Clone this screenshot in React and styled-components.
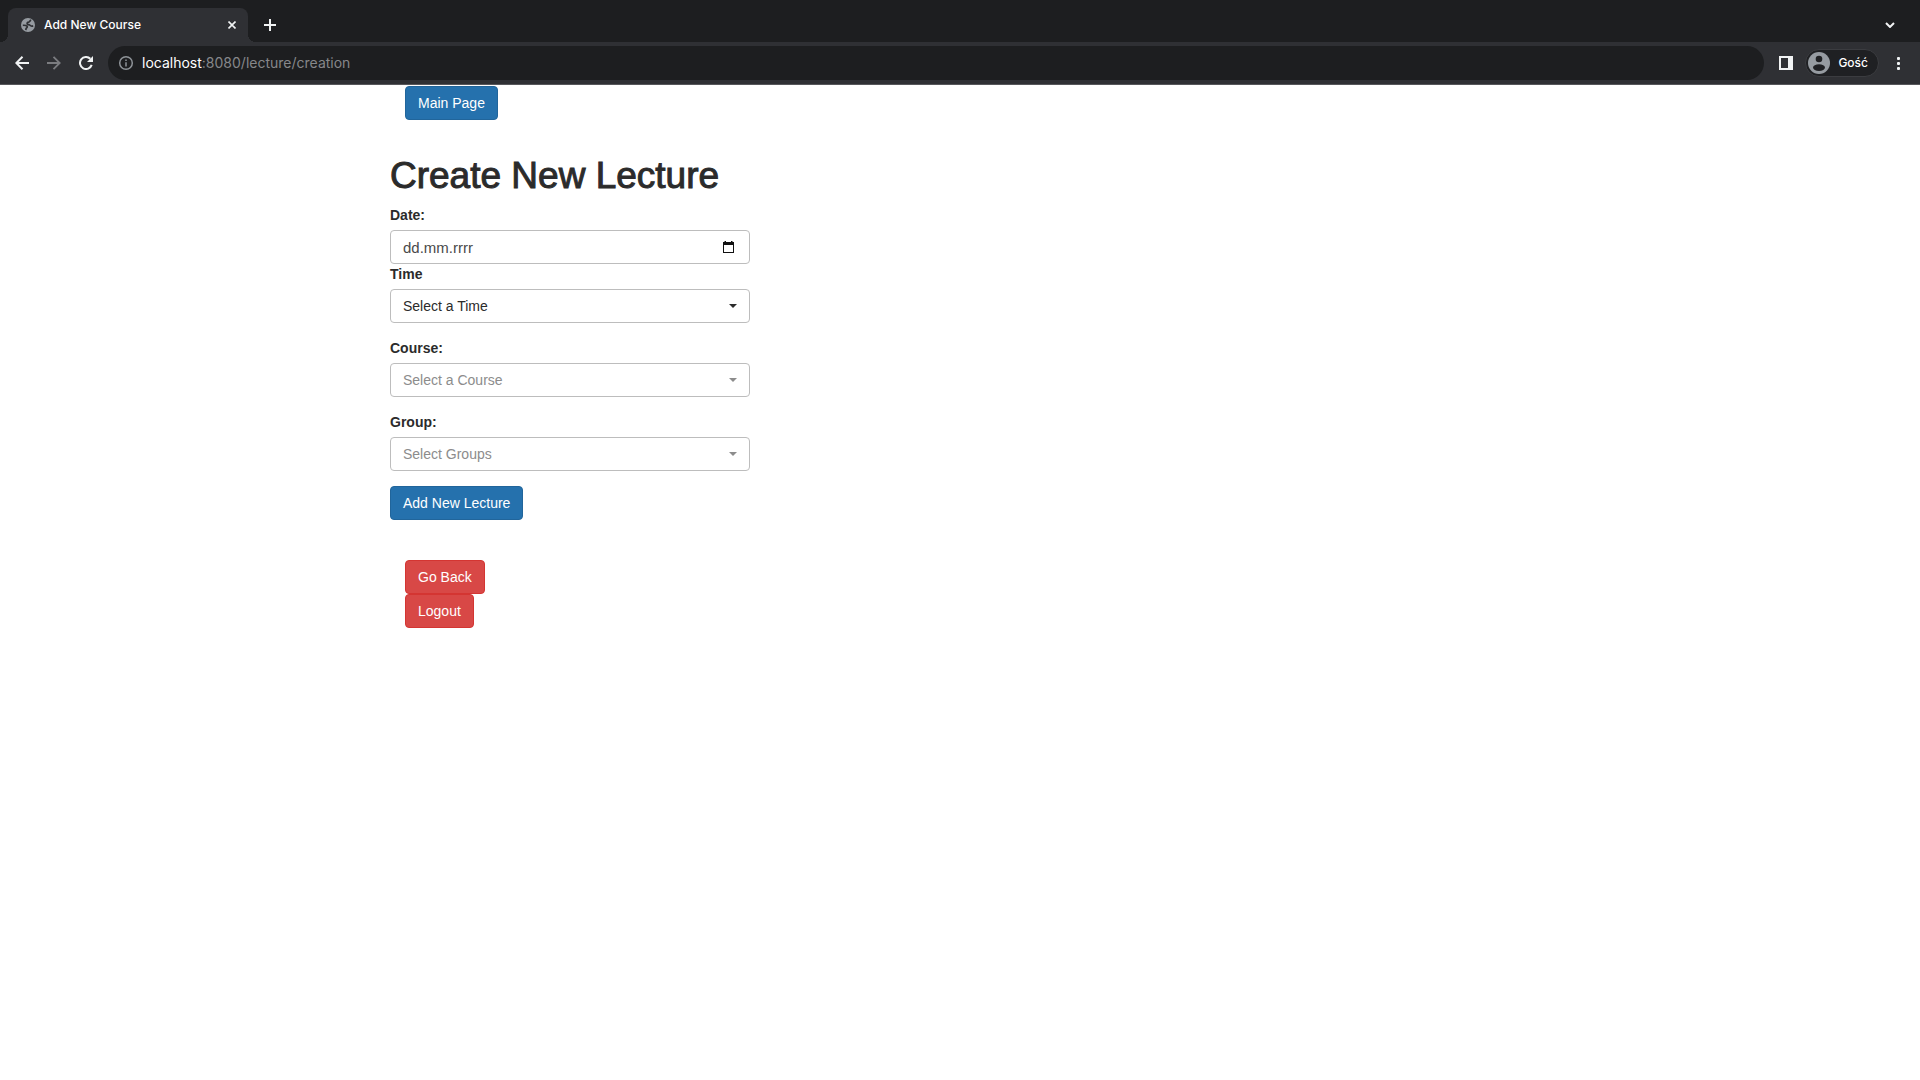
import React from "react";
import styled, { createGlobalStyle } from "styled-components";

const GlobalStyle = createGlobalStyle`
  *, *::before, *::after { box-sizing: border-box; }
  body {
    margin: 0;
    background: #fff;
    color: #2b2b2b;
    font-family: "Liberation Sans", Arial, Helvetica, sans-serif;
    font-size: 14px;
    line-height: 20px;
  }
  button, input, select { font: inherit; margin: 0; }
`;

const Chrome = styled.header`
  border-bottom: 1px solid #57575b;
  background: #1d1e20;
  color: #fff;
  font-family: Inter, Roboto, sans-serif;
`;

const TabStrip = styled.div`
  display: flex;
  align-items: center;
  justify-content: space-between;
  height: 42px;
  padding: 8px 18px 0 8px;
`;

const TabGroup = styled.div`
  display: flex;
  align-items: center;
  gap: 10px;
`;

const Tab = styled.div`
  position: relative;
  display: flex;
  align-items: center;
  gap: 8px;
  width: 240px;
  height: 34px;
  padding: 0 8px 0 12px;
  border-radius: 8px 8px 0 0;
  background: #2f3034;

  &::before,
  &::after {
    content: "";
    position: absolute;
    bottom: 0;
    width: 8px;
    height: 8px;
  }
  &::before {
    right: 100%;
    background: radial-gradient(circle at 0 0, transparent 8px, #2f3034 8px);
  }
  &::after {
    left: 100%;
    background: radial-gradient(circle at 100% 0, transparent 8px, #2f3034 8px);
  }
`;

const TabTitle = styled.span`
  flex: 1;
  font-size: 12px;
  line-height: 16px;
  font-weight: 500;
`;

const IconButton = styled.button`
  display: flex;
  align-items: center;
  justify-content: center;
  flex: none;
  width: ${(p) => p.$width || 24}px;
  height: 24px;
  padding: 0;
  border: 0;
  background: none;
  color: ${(p) => (p.disabled ? "#7b7c80" : "#f1f3f4")};
`;

const Toolbar = styled.div`
  display: flex;
  align-items: center;
  height: 42px;
  padding: 0 10px;
  background: #2f3034;
`;

const NavGroup = styled.nav`
  display: flex;
  gap: 8px;
  margin-right: 10px;
`;

const AddressBar = styled.div`
  display: flex;
  flex: 1;
  align-items: center;
  gap: 8px;
  height: 34px;
  padding: 0 10px;
  border-radius: 17px;
  background: #1d1e20;
  color: #8f9499;
`;

const Address = styled.div`
  flex: 1;
  color: #86878a;
  font-size: 14px;
  line-height: 20px;
  outline: none;
`;

const Host = styled.span`
  color: #fff;
`;

const Actions = styled.div`
  display: flex;
  align-items: center;
  gap: 7px;
  margin-left: 10px;
`;

const Profile = styled.button`
  display: flex;
  align-items: center;
  gap: 8px;
  height: 28px;
  padding: 0 10px 0 2px;
  border: 1px solid #3b3c40;
  border-radius: 14px;
  background: #1f2023;
  color: #fff;
  font-size: 12px;
  font-weight: 500;
`;

const Container = styled.main`
  width: 100%;
  max-width: 1170px;
  margin: 0 auto;
  padding: 1px 15px 32px;
`;

const ButtonStack = styled.div`
  display: flex;
  flex-direction: column;
  align-items: flex-start;
  padding-left: 15px;
`;

const tones = {
  primary: { fill: "#2571ad", edge: "#21659b" },
  danger: { fill: "#d84846", edge: "#d43532" },
};

const Button = styled.button`
  height: 34px;
  padding: 0 12px;
  border: 1px solid ${(p) => tones[p.$tone].edge};
  border-radius: 4px;
  background: ${(p) => tones[p.$tone].fill};
  color: #fff;
  white-space: nowrap;
  cursor: pointer;
`;

const Form = styled.form`
  margin: 35px 0 40px;
`;

const Title = styled.h1`
  margin: 0 0 8px;
  font-size: 37px;
  line-height: 42px;
  font-weight: 400;
  color: #2b2b2b;
  -webkit-text-stroke: 1px #2b2b2b;
`;

const Field = styled.div`
  max-width: 360px;
  margin-bottom: ${(p) => (p.$tight ? 0 : 15)}px;
`;

const Label = styled.label`
  display: block;
  margin-bottom: 5px;
  font-weight: 700;
`;

const Control = styled.div`
  position: relative;
  color: ${(p) => (p.$muted ? "#8c8c8c" : "#2b2b2b")};

  input, select {
    display: block;
    width: 100%;
    height: 34px;
    padding: 0 12px;
    border: 1px solid #bdbdbd;
    border-radius: 4px;
    background: #fff;
    color: inherit;
    opacity: 1;
    appearance: none;
  }
  input {
    font-size: 15px;
  }
  input::placeholder {
    color: #4a4a4a;
    opacity: 1;
  }
`;

const Adornment = styled.span`
  position: absolute;
  top: 0;
  bottom: 0;
  right: ${(p) => p.$right}px;
  display: flex;
  align-items: center;
  pointer-events: none;
`;

function SelectField({ id, label, option, muted }) {
  return (
    <Field>
      <Label htmlFor={id}>{label}</Label>
      <Control $muted={muted}>
        <select id={id} disabled={muted}>
          <option>{option}</option>
        </select>
        <Adornment $right={13}>
          <svg width="8" height="4" viewBox="0 0 8 4" fill="currentColor">
            <path d="M0 0h8L4 4z" />
          </svg>
        </Adornment>
      </Control>
    </Field>
  );
}

const stroke = { fill: "none", stroke: "currentColor", strokeWidth: 2 };

export default function App() {
  return (
    <>
      <GlobalStyle />
      <Chrome>
        <TabStrip>
          <TabGroup>
            <Tab>
              <svg width="16" height="16" viewBox="0 0 16 16">
                <circle cx="8" cy="8" r="7" fill="#969ba1" />
                <path
                  d="M11.200 3.200C9.600 3.400 9.900 4.900 8.700 5.100 7.300 5.300 6.800 6 7.300 7c.5.9 2.100.2 2.900 1.400.6.9 1.700.8 3 .5M2.800 8.300c1.800-.1 3.500 0 4.300 1 .6.8-.2 1.500-.8 1.900-.6.500-.3 1.300-.4 2"
                  fill="none"
                  stroke="#2f3034"
                  strokeWidth="1.700"
                />
              </svg>
              <TabTitle>Add New Course</TabTitle>
              <IconButton aria-label="Close tab" $width={16}>
                <svg width="8" height="8" viewBox="0 0 8 8">
                  <path d="M.5.5l7 7M7.500.5l-7 7" {...stroke} strokeWidth="1.600" />
                </svg>
              </IconButton>
            </Tab>
            <IconButton aria-label="New tab">
              <svg width="12" height="12" viewBox="0 0 12 12">
                <path d="M6 0v12M0 6h12" {...stroke} />
              </svg>
            </IconButton>
          </TabGroup>
          <IconButton aria-label="Search tabs">
            <svg width="10" height="6" viewBox="0 0 10 6">
              <path d="M1 1l4 4 4-4" {...stroke} />
            </svg>
          </IconButton>
        </TabStrip>
        <Toolbar>
          <NavGroup>
            <IconButton aria-label="Back">
              <svg width="14" height="14" viewBox="0 0 14 14">
                <path d="M14 7H1.500M7.500 .8L1.300 7l6.200 6.200" {...stroke} />
              </svg>
            </IconButton>
            <IconButton aria-label="Forward" disabled>
              <svg width="14" height="14" viewBox="0 0 14 14">
                <path d="M0 7h12.500M6.500 .8L12.700 7l-6.200 6.200" {...stroke} strokeWidth="1.800" />
              </svg>
            </IconButton>
            <IconButton aria-label="Reload">
              <svg width="14" height="14" viewBox="0 0 14 14">
                <path d="M12.700 8.900A6 6 0 1 1 11.300 2.800" {...stroke} />
                <path d="M14 0v6H8z" fill="currentColor" />
              </svg>
            </IconButton>
          </NavGroup>
          <AddressBar>
            <svg width="16" height="16" viewBox="0 0 16 16">
              <circle cx="8" cy="8" r="6.300" {...stroke} strokeWidth="1.500" />
              <path d="M8 7.200v4.200M8 4.400v1.600" {...stroke} strokeWidth="1.500" />
            </svg>
            <Address role="textbox" aria-label="Address" contentEditable suppressContentEditableWarning spellCheck={false}>
              <Host>localhost</Host>:8080/lecture/creation
            </Address>
          </AddressBar>
          <Actions>
            <IconButton aria-label="Side panel">
              <svg width="14" height="14" viewBox="0 0 14 14">
                <path d="M0 0h14v14H0zM2 2v10h7V2z" fill="currentColor" fillRule="evenodd" />
              </svg>
            </IconButton>
            <Profile>
              <svg width="22" height="22" viewBox="0 0 22 22">
                <circle cx="11" cy="11" r="11" fill="#969ba1" />
                <circle cx="11" cy="7" r="3.300" fill="#1f2023" />
                <ellipse cx="11" cy="15.600" rx="6" ry="3.400" fill="#1f2023" />
              </svg>
              Gość
            </Profile>
            <IconButton aria-label="Menu">
              <svg width="3" height="13" viewBox="0 0 3 13" fill="currentColor">
                <rect width="3" height="3" rx="1" />
                <rect y="5" width="3" height="3" rx="1" />
                <rect y="10" width="3" height="3" rx="1" />
              </svg>
            </IconButton>
          </Actions>
        </Toolbar>
      </Chrome>
      <Container>
        <ButtonStack>
          <Button type="button" $tone="primary">Main Page</Button>
        </ButtonStack>
        <Form onSubmit={(e) => e.preventDefault()}>
          <Title>Create New Lecture</Title>
          <Field $tight>
            <Label htmlFor="date">Date:</Label>
            <Control>
              <input id="date" type="text" placeholder="dd.mm.rrrr" />
              <Adornment $right={16}>
                <svg width="11" height="12" viewBox="0 0 11 12" fill="#111">
                  <path d="M1.500 0h1.500v1h5V0h1.500v1H11v11H0V1h1.500zM1 4v7h9V4z" fillRule="evenodd" />
                </svg>
              </Adornment>
            </Control>
          </Field>
          <SelectField id="time" label="Time" option="Select a Time" />
          <SelectField id="course" label="Course:" option="Select a Course" muted />
          <SelectField id="group" label="Group:" option="Select Groups" muted />
          <Button type="submit" $tone="primary">Add New Lecture</Button>
        </Form>
        <ButtonStack>
          <Button type="button" $tone="danger">Go Back</Button>
          <Button type="button" $tone="danger">Logout</Button>
        </ButtonStack>
      </Container>
    </>
  );
}
